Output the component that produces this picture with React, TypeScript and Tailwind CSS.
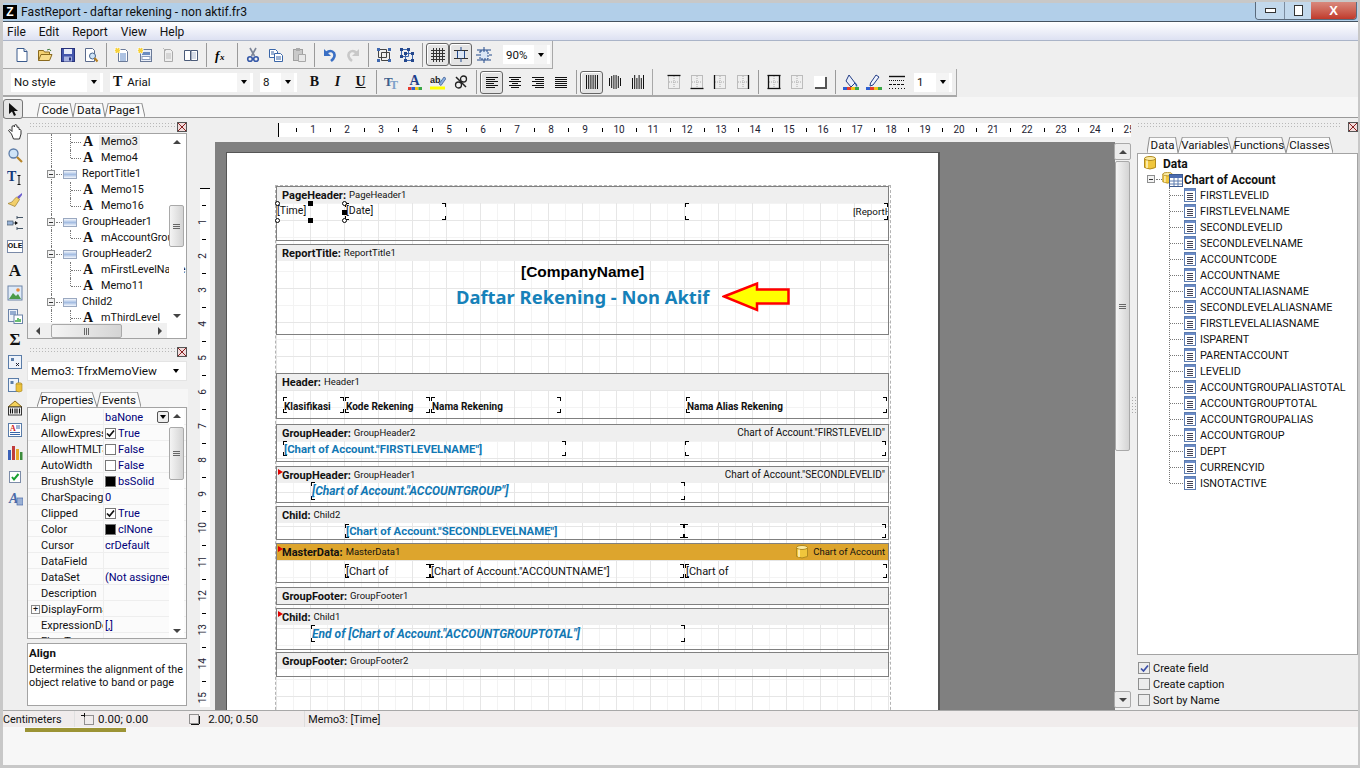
import React from "react";

const Ico = ({ children, s = 16 }: { children: React.ReactNode; s?: number }) => (
  <svg width={s} height={s} viewBox="0 0 16 16" className="shrink-0">{children}</svg>
);

const I = {
  page: <Ico><path d="M3 1.5h7l3 3v10H3z" fill="#fff" stroke="#3a5a8c" /><path d="M10 1.5v3h3" fill="#dfe8f5" stroke="#3a5a8c" /></Ico>,
  open: <Ico><path d="M1.5 13.5v-10h5l1 1.5h5v2" fill="#f3d071" stroke="#8a6a1e" /><path d="M1.5 13.5l2.5-6h11l-2.5 6z" fill="#f8dc8a" stroke="#8a6a1e" /><path d="M10 3q3-2 4 1" fill="none" stroke="#3a7a3a" /></Ico>,
  save: <Ico><rect x="1.5" y="1.5" width="13" height="13" fill="#4557ad" stroke="#27327a" /><rect x="4" y="2" width="8" height="5" fill="#e8ecf8" /><rect x="4" y="9.5" width="8" height="5" fill="#aab4e0" /><rect x="9" y="10.5" width="2" height="3" fill="#27327a" /></Ico>,
  preview: <Ico><path d="M2.5 1.5h7l2 2v11h-9z" fill="#fff" stroke="#5a6a8c" /><circle cx="9.5" cy="9" r="3" fill="#cfe4f7" stroke="#44638c" /><path d="M11.5 11l3 3.5" stroke="#b57d1c" strokeWidth="2" /></Ico>,
  rep1: <Ico><path d="M4.5 2.5h7l2 2v10h-9z" fill="#fff" stroke="#6a7a98" /><path d="M6 7h6M6 9h6M6 11h6M6 13h6" stroke="#5c86c4" /><rect x="1" y="1" width="5" height="5" fill="#f7d23c" stroke="#fff" strokeDasharray="1 1" /></Ico>,
  rep2: <Ico><rect x="3.5" y="2.5" width="11" height="12" fill="#e9eef7" stroke="#6a7a98" /><rect x="5" y="5" width="8" height="3" fill="#6b8cc0" /><rect x="5" y="9.5" width="8" height="3" fill="#fff" stroke="#8a9cbc" /><rect x="1" y="1" width="5" height="5" fill="#f7d23c" stroke="#fff" strokeDasharray="1 1" /></Ico>,
  rep3: <Ico><path d="M4.5 2.5h6l2 2v10h-8z" fill="#eee" stroke="#aaa" /><path d="M6 7h5M6 9h5M6 11h5" stroke="#bbb" /><path d="M3 1l3 3" stroke="#bbb" /></Ico>,
  book: <Ico><path d="M1.5 3.5h6v10h-6zM8 3.5h6.5v10H8z" fill="#fff" stroke="#4a5a78" /><path d="M9 5h4v7H9z" fill="#d7dde8" /></Ico>,
  fx: <Ico><text x="1" y="13" fontFamily="Liberation Serif" fontStyle="italic" fontWeight="700" fontSize="13">f</text><text x="6" y="13" fontFamily="Liberation Serif" fontStyle="italic" fontWeight="700" fontSize="9">x</text></Ico>,
  cut: <Ico><path d="M5 1l4.5 8M11 1L6.5 9" stroke="#7d8698" strokeWidth="1.6" /><circle cx="5" cy="12" r="2.3" fill="none" stroke="#3659a8" strokeWidth="1.6" /><circle cx="11" cy="12" r="2.3" fill="none" stroke="#3659a8" strokeWidth="1.6" /></Ico>,
  copy: <Ico><path d="M1.5 2.5h6l2 2v6h-8z" fill="#fff" stroke="#3a66a8" /><path d="M6.5 6.5h6l2 2v6h-8z" fill="#fff" stroke="#3a66a8" /><path d="M8 10h5M8 12h5M3 5h3M3 7h3" stroke="#3a66a8" /></Ico>,
  paste: <Ico><rect x="2.5" y="2.5" width="9" height="11" fill="#c9c9c9" stroke="#a0a0a0" /><rect x="5" y="1" width="4" height="3" fill="#aaa" /><path d="M7.5 7.5h7v7h-7z" fill="#e8e8e8" stroke="#a8a8a8" /></Ico>,
  undo: <Ico><path d="M4 6q5-4 8 0q2 4-3 8" fill="none" stroke="#3a6fc4" strokeWidth="2.6" /><path d="M2 2v7h7z" fill="#3a6fc4" /></Ico>,
  redo: <Ico><path d="M12 6q-5-4-8 0q-2 4 3 8" fill="none" stroke="#c8c8c8" strokeWidth="2.6" /><path d="M14 2v7H7z" fill="#c8c8c8" /></Ico>,
  group: <Ico><path d="M2.5 2.5h8v8h-8zM5.5 5.5h8v8h-8z" fill="none" stroke="#444" /><path d="M1 1h3v3H1zM12 1h3v3h-3zM1 12h3v3H1zM12 12h3v3h-3z" fill="#3e68b0" /></Ico>,
  ungroup: <Ico><path d="M2.5 2.5h7v7h-7zM6.5 6.5h7v7h-7z" fill="none" stroke="#3e68b0" /><path d="M1 1h3v3H1zM8 1h3v3H8zM1 8h3v3H1zM5 5h3v3H5zM12 5h3v3h-3zM5 12h3v3H5zM12 12h3v3h-3z" fill="#24478c" /></Ico>,
  grid: <Ico><path d="M1 3.5h14M1 6.5h14M1 9.5h14M1 12.5h14M3.5 1v14M6.5 1v14M9.5 1v14M12.5 1v14" stroke="#333" /></Ico>,
  fit: <Ico><path d="M4.5 3.5h7v8h-7z" fill="#dbe6f5" stroke="#234a8c" /><path d="M1 3.500h14M1 11.500h14" stroke="#333" /><path d="M8 0v4M8 11v4" stroke="#234a8c" /></Ico>,
  fit2: <Ico><rect x="4" y="4" width="8" height="8" fill="#dbe6f5" stroke="#234a8c" strokeDasharray="2 1" /><path d="M8 0v3M8 13v3M0 8h3M13 8h3M1 3h14M1 13h14" stroke="#234a8c" /></Ico>,
  tt: <Ico><text x="0" y="12" fontFamily="Liberation Serif" fontWeight="700" fontSize="13" fill="#3c5f8c">T</text><text x="6" y="15" fontFamily="Liberation Serif" fontWeight="700" fontSize="12" fill="#7ea0c8">T</text></Ico>,
  a: <Ico><text x="2.5" y="11" fontFamily="Liberation Serif" fontWeight="700" fontSize="14" fill="#1f3f8c">A</text><path d="M1 13h3.5v3H1z" fill="#e63b2e" /><path d="M4.5 13H8v3H4.5z" fill="#2f5fd0" /><path d="M8 13h3.5v3H8z" fill="#f2c31b" /><path d="M11.5 13H15v3h-3.5z" fill="#39a845" /></Ico>,
  ab: <Ico><text x="0" y="9" fontFamily="Liberation Sans" fontSize="9" fill="#222" fontWeight="700">ab</text><path d="M9 10l5-7 2 1.500-5 7z" fill="#8ab0e0" stroke="#33518c" strokeWidth=".7" /><rect x="0" y="12.500" width="15" height="3" fill="#ffff00" /></Ico>,
  chain: <Ico><path d="M3 3l10 10" fill="none" stroke="#222" strokeWidth="1.500" /><circle cx="10.500" cy="5" r="3" fill="none" stroke="#222" strokeWidth="1.300" /><circle cx="5.500" cy="11" r="3" fill="none" stroke="#222" strokeWidth="1.300" /></Ico>,
  fill: <Ico><path d="M6 1l6 8-4 4-5-6z" fill="#e8eefa" stroke="#223c84" /><path d="M12 9q2 2 1.500 3.500" stroke="#2c5aa8" strokeWidth="1.500" fill="none" /><path d="M0 13h4v3H0z" fill="#2f5fd0" /><path d="M4 13h4v3H4z" fill="#e63b2e" /><path d="M8 13h4v3H8z" fill="#f2c31b" /><path d="M12 13h4v3h-4z" fill="#39a845" /></Ico>,
  pen: <Ico><path d="M10 1l3 2-6 8-3 1 .500-3z" fill="#f0f4ff" stroke="#223c84" /><path d="M0 13h4v3H0z" fill="#2f5fd0" /><path d="M4 13h4v3H4z" fill="#e63b2e" /><path d="M8 13h4v3H8z" fill="#f2c31b" /><path d="M12 13h4v3h-4z" fill="#39a845" /></Ico>,
  lines: <Ico><path d="M0 2.500h16" stroke="#111" strokeWidth="1.400" /><path d="M0 6.500h16" stroke="#111" strokeDasharray="1 1" /><path d="M0 10.500h16" stroke="#111" strokeDasharray="3 1" /><path d="M0 14.500h16" stroke="#111" strokeDasharray="1 2" /></Ico>,
};

const align = (kind: string) => {
  const lines: [number, number][] =
    kind === "l" ? [[2, 14], [2, 11], [2, 14], [2, 10], [2, 14], [2, 11]] :
    kind === "c" ? [[2, 14], [4, 12], [2, 14], [5, 11], [2, 14], [4, 12]] :
    kind === "r" ? [[2, 14], [5, 14], [2, 14], [6, 14], [2, 14], [5, 14]] :
    [[2, 14], [2, 14], [2, 14], [2, 14], [2, 14], [2, 14]];
  return <Ico>{lines.map((l, i) => <path key={i} d={`M${l[0]} ${3.5 + i * 2}H${l[1]}`} stroke="#111" />)}</Ico>;
};
const vbars = (kind: string) => {
  const h: [number, number][] = kind === "a" ? [[1, 15], [1, 15], [1, 15], [1, 15], [1, 15], [1, 15]] : kind === "b" ? [[4, 12], [2, 14], [1, 15], [1, 15], [2, 14], [4, 12]] : [[4, 15], [1, 15], [4, 15], [1, 15], [4, 15], [1, 15]];
  return <Ico>{h.map((l, i) => <path key={i} d={`M${2.5 + i * 2.2} ${l[0]}V${l[1]}`} stroke="#111" />)}</Ico>;
};
const frame = (sides: string) => (
  <Ico>
    <rect x="2.5" y="1.500" width="11" height="13" fill="none" stroke="#888" strokeDasharray="1 1" />
    <path d="M8 2v12M3 8h10" stroke="#aaa" strokeDasharray="1 1" />
    {sides.includes("t") && <path d="M1.500 1.500h13" stroke="#111" strokeWidth="1.300" />}
    {sides.includes("b") && <path d="M1.500 14.500h13" stroke="#111" strokeWidth="1.300" />}
    {sides.includes("l") && <path d="M2.500 1v14" stroke="#111" strokeWidth="1.300" />}
    {sides.includes("r") && <path d="M13.500 1v14" stroke="#111" strokeWidth="1.300" />}
  </Ico>
);
const shadow = <Ico><rect x="2" y="2" width="11" height="11" fill="#fff" /><path d="M13 3h2v12H3v-2h10z" fill="#555" /></Ico>;

const Btn = ({ children, on }: { children: React.ReactNode; on?: boolean }) => (
  <div className={on ? "w-[23px] h-[23px] flex items-center justify-center rounded-[3px] border border-[#666] bg-[#e4e4e4] shadow-[inset_1px_1px_0_#fff]" : "w-[23px] h-[23px] flex items-center justify-center"}>{children}</div>
);
const Sep = () => (
  <div className="w-[8px] h-[24px] flex justify-center"><div className="w-[1px] h-full bg-[#9a9a9a]" /></div>
);
const Arrow = () => <div className="w-0 h-0 border-x-[3.5px] border-x-transparent border-t-[4px] border-t-black" />;
const Combo = ({ label, w, icon }: { label: string; w: string; icon?: React.ReactNode }) => (
  <div className={`${w} h-[19px] bg-white flex items-center pl-[3px] gap-[1px] relative`}>
    {icon}
    <span className="text-[11.5px] leading-none pt-[2px]">{label}</span>
    <div className="absolute right-[3px] top-0 bottom-0 w-[13px] flex items-center justify-center bg-[#f4f4f4]"><Arrow /></div>
  </div>
);
const Grip = ({ w }: { w: string }) => (
  <div className={`${w} h-[7px] bg-[radial-gradient(#b9b9b9_0.7px,transparent_0.8px)] bg-size-[3px_3px]`} />
);
const CloseX = () => (
  <div className="w-[10px] h-[10px] border border-[#555] bg-[#f2dcdc] flex items-center justify-center">
    <svg width="8" height="8" viewBox="0 0 8 8"><path d="M0 0l8 8M8 0L0 8" stroke="#8a2020" /></svg>
  </div>
);

const Tab = ({ label, w }: { label: string; w: string }) => (
  <div className={`${w} relative h-full flex items-center justify-center`}>
    <svg className="absolute inset-0 w-full h-full" viewBox="0 0 100 100" preserveAspectRatio="none">
      <path d="M0 100L8 1H92L100 100" fill="#fbfbfb" stroke="#8c8c8c" vectorEffect="non-scaling-stroke" />
    </svg>
    <span className="relative text-[11.5px] leading-none pt-[2px]">{label}</span>
  </div>
);

const ScrollBtn = ({ dir }: { dir: "u" | "d" | "l" | "r" }) => (
  <div className="w-[15px] h-[15px] flex items-center justify-center">
    <div className={
      dir === "u" ? "w-0 h-0 border-x-[4px] border-x-transparent border-b-[4px] border-b-[#444]" :
      dir === "d" ? "w-0 h-0 border-x-[4px] border-x-transparent border-t-[4px] border-t-[#444]" :
      dir === "l" ? "w-0 h-0 border-y-[4px] border-y-transparent border-r-[4px] border-r-[#444]" :
      "w-0 h-0 border-y-[4px] border-y-transparent border-l-[4px] border-l-[#444]"} />
  </div>
);
const Thumb = ({ cls, vertical }: { cls: string; vertical?: boolean }) => (
  <div className={`${cls} rounded-[2px] border border-[#a9a9a9] bg-gradient-to-r from-[#f4f4f4] to-[#d4d4d4] flex items-center justify-center`}>
    {vertical ? (
      <div className="flex flex-col gap-[1px]"><div className="w-[7px] h-[1px] bg-[#666]" /><div className="w-[7px] h-[1px] bg-[#666]" /><div className="w-[7px] h-[1px] bg-[#666]" /></div>
    ) : (
      <div className="flex gap-[1px]"><div className="w-[1px] h-[7px] bg-[#666]" /><div className="w-[1px] h-[7px] bg-[#666]" /><div className="w-[1px] h-[7px] bg-[#666]" /></div>
    )}
  </div>
);

/* left tools */
const Tools = [
  <Ico><path d="M4.500 10L1.500 6.500q.8-1.500 2.500-.300L5 7.500V3q0-1.300 1.200-1.300T7.500 3V1.800q0-1.200 1.200-1.200t1.300 1.400v1.200q1.800-.8 2 .8v1.500q1.800-.5 2 1v3.500L12.500 15h-6z" fill="#fff" stroke="#333" /></Ico>,
  <Ico><circle cx="6.500" cy="6.500" r="4.500" fill="#cfe4f7" stroke="#5c7ca8" strokeWidth="1.300" /><path d="M10 10l5 5" stroke="#b8862a" strokeWidth="2.200" /></Ico>,
  <Ico><text x="0" y="12" fontFamily="Liberation Serif" fontWeight="700" fontSize="14" fill="#123a7c">T</text><path d="M12 7v8M10.500 6.500h3M10.500 15.500h3" stroke="#111" /></Ico>,
  <Ico><path d="M15 1L10 5l2 2 3-4z" fill="#6a5acd" /><path d="M9.500 5l3 2.500-4.500 7-7-3q5-1 6-4z" fill="#f2cf6a" stroke="#9c7d2a" strokeWidth=".7" /></Ico>,
  <Ico><rect x="0" y="6" width="6" height="4" fill="#9ab4d8" stroke="#456" strokeWidth=".7" /><path d="M10 2.500h6M10 13.500h6M10 1v3M10 12v3M6 8h4" stroke="#456" /><path d="M8 6l3 2-3 2z" fill="#111" /></Ico>,
  <div className="w-[16px] h-[13px] border border-[#7a8aa8] bg-white flex items-center justify-center text-[8px] font-bold leading-none">OLE</div>,
  <span className="font-['Liberation_Serif'] font-bold text-[17px] leading-none">A</span>,
  <Ico><rect x="1" y="1" width="14" height="14" fill="#dfeaf8" stroke="#6c84a8" /><path d="M2 14l4-6 3 3 2-2 3 5z" fill="#4a9a4a" /><circle cx="11" cy="5" r="1.800" fill="#e88a3c" /></Ico>,
  <Ico><rect x="1.500" y="1.500" width="9" height="12" fill="#eef2f8" stroke="#6c84a8" /><path d="M3 4h6M3 6h6" stroke="#3a66a8" /><rect x="7" y="7" width="8.500" height="8.500" fill="#fff" stroke="#6c84a8" /><path d="M9 14v-2M11 14v-4M13 14v-3" stroke="#39a845" strokeWidth="1.500" /></Ico>,
  <span className="font-['Liberation_Serif'] font-bold text-[17px] leading-none">Σ</span>,
  <Ico><rect x="1.500" y="1.500" width="13" height="13" fill="#eef3fa" stroke="#5a7ca8" /><path d="M4 4h3v3H4z" fill="#5a7ca8" /><path d="M9 9l3 3M12 9l-3 3" stroke="#223" /></Ico>,
  <Ico><rect x="1.500" y="1.500" width="10" height="13" fill="#eef3fa" stroke="#5a7ca8" /><path d="M3.500 4h3v3h-3z" fill="#5a7ca8" /><ellipse cx="12" cy="7" rx="3" ry="1.300" fill="#f3d666" stroke="#a88420" strokeWidth=".6" /><path d="M9 7v7q3 2 6 0V7z" fill="#ecc23c" stroke="#a88420" strokeWidth=".6" /></Ico>,
  <Ico><path d="M8 1l7 6H1z" fill="#f4d25a" stroke="#8a6a1e" /><rect x="1.500" y="7" width="13" height="8" fill="#fff" stroke="#333" /><path d="M3.500 8.500v5M5.500 8.500v5M8 8.500v5M10 8.500v5M12.500 8.500v5" stroke="#111" strokeWidth="1.200" /></Ico>,
  <Ico><rect x="1.500" y="1.500" width="13" height="13" fill="#fff" stroke="#5a7ca8" /><text x="3" y="9" fontSize="8" fontFamily="Liberation Serif" fontWeight="700" fill="#d02020">A</text><path d="M9 4h4M9 6h4M3 10.500h10M3 12.500h10" stroke="#3a66a8" /></Ico>,
  <Ico><rect x="1" y="5" width="3" height="10" fill="#3c62b8" /><rect x="5" y="1" width="3" height="14" fill="#c03c3c" /><rect x="9" y="4" width="3" height="11" fill="#e8a92c" /><rect x="13" y="7" width="2.500" height="8" fill="#3c8c3c" /></Ico>,
  <Ico><rect x="2.500" y="2.500" width="11" height="11" fill="#fff" stroke="#7c8ca8" /><path d="M5 8l2 2.500L11.500 5" fill="none" stroke="#18a030" strokeWidth="2" /></Ico>,
  <Ico><text x="2" y="12" fontSize="14" fontFamily="Liberation Serif" fontWeight="700" fontStyle="italic" fill="#4a6aa8">A</text><rect x="10" y="7" width="6" height="7" fill="#9ab0d4" stroke="#4a6aa8" strokeWidth=".7" /></Ico>,
];
const toolGaps = ["mt-[6px]", "mt-[7px]", "mt-[6px]", "mt-[7px]", "mt-[7px]", "mt-[7px]", "mt-[8px]", "mt-[7px]", "mt-[7px]", "mt-[7px]", "mt-[7px]", "mt-[7px]", "mt-[7px]", "mt-[6px]", "mt-[7px]", "mt-[8px]", "mt-[6px]"];

const Toggle = () => (
  <div className="w-[8px] h-[8px] border border-[#8e8f8f] bg-[#f3f3f3] flex items-center justify-center"><div className="w-[4px] h-[1px] bg-[#333]" /></div>
);
const BandIco = () => (
  <div className="w-[14px] h-[9px] border border-[#9aa8c0] bg-gradient-to-b from-[#f4f7fc] via-[#a4bde2] to-[#f4f7fc]" />
);

const treeRows: { t: string; band?: boolean; sel?: boolean; last?: boolean }[] = [
  { t: "Memo3", sel: true }, { t: "Memo4", last: true }, { t: "ReportTitle1", band: true }, { t: "Memo15" }, { t: "Memo16", last: true },
  { t: "GroupHeader1", band: true }, { t: "mAccountGroup", last: true }, { t: "GroupHeader2", band: true }, { t: "mFirstLevelName" }, { t: "Memo11", last: true },
  { t: "Child2", band: true }, { t: "mThirdLevel" },
];

const TreeRow = ({ r }: { r: (typeof treeRows)[number] }) => (
  <div className="relative h-[16px] flex items-center whitespace-nowrap">
    <div className="absolute left-[23px] top-0 bottom-0 border-l border-dotted border-[#777]" />
    {r.band ? (
      <>
        <div className="absolute left-[19px]"><Toggle /></div>
        <div className="absolute left-[28px] w-[6px] top-[8px] border-t border-dotted border-[#777]" />
        <div className="absolute left-[35px]"><BandIco /></div>
        <span className="absolute left-[54px] top-[3px] text-[10.800px] leading-none">{r.t}</span>
      </>
    ) : (
      <>
        <div className={r.last ? "absolute left-[42px] top-0 h-[8px] border-l border-dotted border-[#777]" : "absolute left-[42px] top-0 bottom-0 border-l border-dotted border-[#777]"} />
        <div className="absolute left-[43px] w-[10px] top-[8px] border-t border-dotted border-[#777]" />
        <span className="absolute left-[55px] font-['Liberation_Serif'] font-bold text-[14px] leading-none">A</span>
        <span className={r.sel ? "absolute left-[73px] top-[1px] text-[10.800px] leading-none bg-[#efefef] px-[2px] -ml-[2px] py-[2px]" : "absolute left-[73px] top-[3px] text-[10.800px] leading-none"}>{r.t}</span>
      </>
    )}
  </div>
);

const Check = ({ on }: { on?: boolean }) => (
  <div className="w-[11px] h-[11px] border border-[#777] bg-white flex items-center justify-center shrink-0">
    {on && <svg width="9" height="9" viewBox="0 0 9 9"><path d="M1 4.500l2.500 2.500L8 1.500" fill="none" stroke="#111" strokeWidth="1.700" /></svg>}
  </div>
);

const props: { k: string; v?: string; check?: boolean; on?: boolean; swatch?: boolean; plus?: boolean; dd?: boolean }[] = [
  { k: "Align", v: "baNone", dd: true }, { k: "AllowExpressions", v: "True", check: true, on: true }, { k: "AllowHTMLTags", v: "False", check: true },
  { k: "AutoWidth", v: "False", check: true }, { k: "BrushStyle", v: "bsSolid", swatch: true }, { k: "CharSpacing", v: "0" },
  { k: "Clipped", v: "True", check: true, on: true }, { k: "Color", v: "clNone", swatch: true }, { k: "Cursor", v: "crDefault" },
  { k: "DataField" }, { k: "DataSet", v: "(Not assigned)" }, { k: "Description" }, { k: "DisplayFormat", plus: true }, { k: "ExpressionDelimiters", v: "[,]" }, { k: "FlowTo" },
];

const fields = ["FIRSTLEVELID", "FIRSTLEVELNAME", "SECONDLEVELID", "SECONDLEVELNAME", "ACCOUNTCODE", "ACCOUNTNAME", "ACCOUNTALIASNAME", "SECONDLEVELALIASNAME", "FIRSTLEVELALIASNAME", "ISPARENT", "PARENTACCOUNT", "LEVELID", "ACCOUNTGROUPALIASTOTAL", "ACCOUNTGROUPTOTAL", "ACCOUNTGROUPALIAS", "ACCOUNTGROUP", "DEPT", "CURRENCYID", "ISNOTACTIVE"];

const Cyl = ({ w = 12, h = 14 }: { w?: number; h?: number }) => (
  <svg width={w} height={h} viewBox="0 0 12 14" className="shrink-0">
    <path d="M.5 2.500v9q5.500 3 11 0v-9z" fill="#f0c63c" stroke="#b08a20" />
    <ellipse cx="6" cy="2.500" rx="5.500" ry="2" fill="#fbeaa0" stroke="#b08a20" />
    <path d="M3 4.500v7.500" stroke="#fff6c8" strokeWidth="1.500" />
  </svg>
);

const Corners = () => (
  <>
    <div className="absolute left-0 top-0 w-[4px] h-[4px] border-l border-t border-black" />
    <div className="absolute right-0 top-0 w-[4px] h-[4px] border-r border-t border-black" />
    <div className="absolute left-0 bottom-0 w-[4px] h-[4px] border-l border-b border-black" />
    <div className="absolute right-0 bottom-0 w-[4px] h-[4px] border-r border-b border-black" />
  </>
);
const Memo = ({ cls, children, txt }: { cls: string; children?: React.ReactNode; txt?: string }) => (
  <div className={`absolute ${cls}`}>
    <Corners />
    {children && <div className={`absolute left-[1px] top-0 bottom-0 flex items-center whitespace-nowrap ${txt ?? ""}`}>{children}</div>}
  </div>
);
const Band = ({ cls, name, label, right, hdr, tri, children }: { cls: string; name: string; label: string; right?: React.ReactNode; hdr?: string; tri?: boolean; children?: React.ReactNode }) => (
  <div className={`relative border border-[#808080] w-[613px] shrink-0 ${cls}`}>
    <div className={`h-[16px] flex items-center pl-[5px] whitespace-nowrap leading-none ${hdr ?? "bg-[#efefef]"}`}>
      <b className="font-bold text-[11px]">{name}:</b><span className="ml-[3px] text-[9.500px]">{label}</span>
      {right && <div className="ml-auto pr-[3px] flex items-center gap-[5px] text-[10px]">{right}</div>}
    </div>
    {tri && <div className="absolute left-[1px] top-[2px] w-0 h-0 border-y-[3.5px] border-y-transparent border-l-[5px] border-l-[#e00000]" />}
    {children}
  </div>
);
const Handle = ({ cls }: { cls: string }) => <div className={`absolute w-[5px] h-[5px] bg-black ${cls}`} />;
const HollowHandle = ({ cls }: { cls: string }) => <div className={`absolute w-[5px] h-[5px] rounded-full border border-black bg-white ${cls}`} />;

const blue = "text-[#1278b4] font-bold text-[11.400px] leading-none pt-[2px]";
const blueI = "text-[#1278b4] font-bold italic text-[12px] leading-none";
const hdrTxt = "font-bold text-[10px] leading-none pt-[3px]";

const hCells = Array.from({ length: 25 }, (_, i) => i + 1);
const vCells = Array.from({ length: 15 }, (_, i) => i + 1);

export default function App() {
  return (
    <div className="w-[1360px] h-[768px] overflow-hidden bg-[#c8c8c8] pt-[3px] pb-[3px] pl-[3px] pr-[2px] flex flex-col text-[#111] font-['Roboto','Liberation_Sans',sans-serif]">
      {/* title */}
      <div className="h-[18px] shrink-0 bg-[#b2cfe9] flex items-center relative">
        <div className="w-[14px] h-[14px] bg-black text-white font-bold text-[12px] leading-none flex items-center justify-center ml-0 font-['Liberation_Sans']">Z</div>
        <span className="ml-[4px] text-[12.200px] leading-none">FastReport - daftar rekening - non aktif.fr3</span>
        <div className="absolute right-[1px] top-[-1px] h-[18px] w-[102px] flex rounded-b-[4px] border border-t-0 border-[#5a6a7c] overflow-hidden">
          <div className="w-[28px] bg-[#c2d8ec] flex items-center justify-center"><div className="w-[11px] h-[5px] border border-[#333] bg-white" /></div>
          <div className="w-[27px] bg-[#c2d8ec] border-l border-[#7c8ca0] flex items-center justify-center"><div className="w-[9px] h-[11px] border border-[#333] bg-white" /></div>
          <div className="flex-1 bg-gradient-to-b from-[#d8887c] to-[#c0392b] text-white font-bold text-[13px] leading-none flex items-center justify-center font-['Liberation_Sans']">X</div>
        </div>
      </div>
      <div className="h-[1px] shrink-0 bg-[#44525f]" />
      {/* menu */}
      <div className="h-[19px] shrink-0 bg-gradient-to-b from-[#ffffff] to-[#dde1f2] border-b border-[#aab4c8] flex items-center gap-[13px] pl-[4px] pt-[2px] text-[12px] leading-none">
        <span>File</span><span>Edit</span><span>Report</span><span>View</span><span>Help</span>
      </div>
      {/* toolbar 1 */}
      <div className="h-[28px] shrink-0 bg-[#efefef] flex">
        <div className="w-[550px] h-[28px] border-b border-r border-[#a8a8a8] flex items-center pl-[7px]">
          <Btn>{I.page}</Btn><Btn>{I.open}</Btn><Btn>{I.save}</Btn><Btn>{I.preview}</Btn><Sep />
          <Btn>{I.rep1}</Btn><Btn>{I.rep2}</Btn><Btn>{I.rep3}</Btn><Btn>{I.book}</Btn><Sep />
          <Btn>{I.fx}</Btn><Sep />
          <Btn>{I.cut}</Btn><Btn>{I.copy}</Btn><Btn>{I.paste}</Btn><Sep />
          <Btn>{I.undo}</Btn><Btn>{I.redo}</Btn><Sep />
          <Btn>{I.group}</Btn><Btn>{I.ungroup}</Btn><Sep />
          <Btn on>{I.grid}</Btn><Btn on>{I.fit}</Btn><Btn>{I.fit2}</Btn>
          <div className="ml-[8px]"><Combo label="90%" w="w-[47px]" /></div>
        </div>
      </div>
      {/* toolbar 2 */}
      <div className="h-[28px] shrink-0 bg-[#efefef] flex">
        <div className="w-[954px] h-[28px] border-b-2 border-r border-[#a8a8a8] flex items-center pl-[8px]">
          <Combo label="No style" w="w-[92px]" />
          <div className="ml-[7px]"><Combo label="Arial" w="w-[143px]" icon={<span className="font-['Liberation_Serif'] font-bold text-[14px] leading-none mr-[4px]">T</span>} /></div>
          <div className="ml-[7px]"><Combo label="8" w="w-[37px]" /></div>
          <div className="w-[6px]" />
          <Btn><span className="font-['Liberation_Serif'] font-bold text-[14px] leading-none">B</span></Btn>
          <Btn><span className="font-['Liberation_Serif'] font-bold italic text-[14px] leading-none">I</span></Btn>
          <Btn><span className="font-['Liberation_Serif'] font-bold underline text-[14px] leading-none">U</span></Btn>
          <Sep />
          <Btn>{I.tt}</Btn><Btn>{I.a}</Btn><Btn>{I.ab}</Btn><Btn>{I.chain}</Btn><Sep />
          <Btn on>{align("l")}</Btn><Btn>{align("c")}</Btn><Btn>{align("r")}</Btn><Btn>{align("j")}</Btn><Sep />
          <Btn on>{vbars("a")}</Btn><Btn>{vbars("b")}</Btn><Btn>{vbars("c")}</Btn>
          <div className="w-[3px]" /><div className="w-[1px] h-full bg-[#a8a8a8]" />
          <div className="w-[9px]" />
          <Btn>{frame("t")}</Btn><Btn>{frame("b")}</Btn><Btn>{frame("l")}</Btn><Btn>{frame("r")}</Btn><Sep />
          <Btn>{frame("tblr")}</Btn><Btn>{frame("")}</Btn><Btn>{shadow}</Btn><Sep />
          <Btn>{I.fill}</Btn><Btn>{I.pen}</Btn><Btn>{I.lines}</Btn>
          <div className="ml-[6px]"><Combo label="1" w="w-[38px]" /></div>
        </div>
      </div>
      {/* tabs row */}
      <div className="h-[21px] shrink-0 bg-[#f6f6f6] border-b border-[#9a9a9a] flex relative">
        <div className="w-[20px] h-[20px] mt-[2px] rounded-[3px] border border-[#777] bg-[#e6e6e6] flex items-center justify-center">
          <svg width="12" height="15" viewBox="0 0 12 15"><path d="M2 1v11l3-2.500 2 4.500 2-1-2-4h4z" fill="#111" /></svg>
        </div>
        <div className="ml-[14px] mt-[6px] h-[14px] flex">
          <Tab label="Code" w="w-[36px]" /><Tab label="Data" w="w-[32px]" /><Tab label="Page1" w="w-[40px]" />
        </div>
      </div>
      {/* main */}
      <div className="flex-1 min-h-0 flex bg-[#efefef]">
        {/* left tools */}
        <div className="w-[24px] shrink-0 flex flex-col items-center">
          {Tools.map((t, i) => (
            <div key={i} className={`h-[16px] flex items-center justify-center ${toolGaps[i]}`}>{t}</div>
          ))}
        </div>
        {/* left panels */}
        <div className="w-[161px] shrink-0 flex flex-col pt-[4px]">
          <div className="h-[11px] flex items-start pl-[2px] pr-[1px] justify-between">
            <Grip w="w-[146px]" /><CloseX />
          </div>
          <div className="h-[206px] w-[160px] border border-[#a3a3a3] bg-white relative overflow-hidden">
            <div className="absolute inset-x-0 top-0 h-[192px] overflow-hidden">
              {treeRows.map((r) => <TreeRow key={r.t} r={r} />)}
            </div>
            <div className="absolute right-[2px] top-0 bottom-[15px] w-[15px] bg-white flex flex-col items-center justify-between">
              <ScrollBtn dir="u" />
              <Thumb cls="absolute top-[71px] h-[42px] w-[15px]" vertical />
              <ScrollBtn dir="d" />
            </div>
            <div className="absolute left-0 right-[19px] bottom-0 h-[15px] bg-[#f0f0f0] flex items-center pl-[2px] justify-between">
              <ScrollBtn dir="l" />
              <Thumb cls="absolute left-[23px] top-[1px] w-[71px] h-[14px]" />
              <ScrollBtn dir="r" />
            </div>
          </div>
          <div className="mt-[8px] h-[11px] flex items-start pl-[2px] pr-[1px] justify-between">
            <Grip w="w-[146px]" /><CloseX />
          </div>
          <div className="mt-[3px] h-[20px] w-[160px] bg-white border border-[#e4e4e4] flex items-center justify-between px-[3px] text-[11.800px] leading-none">
            <span className="pt-[2px]">Memo3: TfrxMemoView</span><div className="mr-[4px]"><Arrow /></div>
          </div>
          <div className="mt-[8px] h-[18px] flex pl-[10px] shrink-0 bg-[#f6f6f6] pt-[3px]">
            <Tab label="Properties" w="w-[60px]" /><Tab label="Events" w="w-[44px]" />
          </div>
          <div className="h-[232px] w-[160px] border border-[#a3a3a3] bg-[#fbfbfb] relative overflow-hidden">
            <div className="h-[1px]" />
            {props.map((p) => (
              <div key={p.k} className="h-[16px] flex border-b border-[#eeeeee] text-[11px] leading-none">
                <div className="w-[76px] shrink-0 border-r border-[#eeeeee] relative overflow-hidden flex items-center pl-[13px] pt-[1px] whitespace-nowrap">
                  {p.plus && <div className="absolute left-[3px] w-[9px] h-[9px] border border-[#888] flex items-center justify-center text-[9px] leading-none">+</div>}
                  {p.k}
                </div>
                <div className="w-[66px] shrink-0 overflow-hidden flex items-center pl-[1px] pt-[1px] gap-[2px] text-[#00007a] whitespace-nowrap relative">
                  {p.check && <Check on={p.on} />}
                  {p.swatch && <div className="w-[11px] h-[11px] bg-black border border-[#777] shrink-0" />}
                  {p.v}
                  {p.dd && <div className="absolute right-[1px] w-[12px] h-[12px] border border-[#555] rounded-[2px] bg-[#eee] flex items-center justify-center"><Arrow /></div>}
                </div>
              </div>
            ))}
            <div className="absolute right-[2px] top-0 bottom-0 w-[15px] bg-white flex flex-col items-center justify-between">
              <ScrollBtn dir="u" />
              <Thumb cls="absolute top-[19px] h-[53px] w-[15px]" vertical />
              <ScrollBtn dir="d" />
            </div>
          </div>
          <div className="mt-[4px] h-[63px] w-[160px] border border-[#a3a3a3] bg-white px-[1px] pt-[3px] text-[10.800px] leading-[13px]">
            <div className="font-bold h-[16px] text-[11.500px]">Align</div>
            <div>Determines the alignment of the object relative to band or page</div>
          </div>
        </div>
        {/* center */}
        <div className="flex-1 min-w-0 flex flex-col">
          <div className="h-[5px] shrink-0" />
          <div className="h-[14px] w-[853px] shrink-0 ml-[90px] flex bg-white overflow-hidden text-[10px] leading-none text-[#223] items-center">
            <div className="w-[1px] bg-black h-full shrink-0" />
            <div className="w-[8.5px] shrink-0" />
            {hCells.map((n) => (
              <React.Fragment key={n}>
                <div className="w-[17px] shrink-0 flex items-center justify-center"><div className="w-[1px] h-[4px] bg-black" /></div>
                <div className="w-[17px] shrink-0 text-center">{n}</div>
              </React.Fragment>
            ))}
          </div>
          <div className="flex-1 min-h-0 flex">
            {/* vertical ruler */}
            <div className="w-[27px] shrink-0 pl-[12px] pt-[51px] overflow-hidden">
              <div className="w-[10px] bg-white flex flex-col text-[10px] leading-none text-[#223]">
                <div className="h-[1px] bg-black" />
                <div className="h-[7.5px] shrink-0" />
                {vCells.map((n) => (
                  <React.Fragment key={n}>
                    <div className="h-[17px] shrink-0 flex items-center"><div className="ml-[2px] w-[4px] h-[1px] bg-black" /></div>
                    <div className="h-[17px] shrink-0 flex items-center justify-center pr-[4px]"><span className="[writing-mode:vertical-rl] rotate-180">{n}</span></div>
                  </React.Fragment>
                ))}
              </div>
            </div>
            {/* gray desk */}
            <div className="w-[900px] shrink-0 mt-[5px] bg-[#808080] pt-[10px] pl-[11px] overflow-hidden">
              <div className="w-[714px] h-[600px] bg-white border-l border-t border-[#555] border-r-2 pl-[48px] pt-[32px]">
                <div className="relative w-[616px] h-[560px] border-x border-t border-dashed border-[#b4b4b4] bg-[linear-gradient(#e6e6e6_1px,transparent_1px),linear-gradient(90deg,#e6e6e6_1px,transparent_1px),linear-gradient(#f3f3f3_1px,transparent_1px),linear-gradient(90deg,#f3f3f3_1px,transparent_1px)] bg-size-[34px_34px,34px_34px,17px_17px,17px_17px] flex flex-col">
                  <Band cls="h-[55px] bg-transparent" name="PageHeader" label="PageHeader1">
                    <Memo cls="left-[68px] top-[16px] w-[101px] h-[17px]" txt="text-[10.500px] leading-none"><span>[Date]</span></Memo>
                    <Memo cls="left-[408px] top-[16px] w-[203px] h-[17px]" />
                    <div className="absolute left-0 top-[16px] w-[67px] h-[17px] flex items-center whitespace-nowrap text-[10.500px] leading-none">[Time]</div>
                    <div className="absolute left-[576px] top-[16px] h-[17px] w-[35px] overflow-hidden flex items-center whitespace-nowrap text-[9.800px] leading-none">[ReportHeader]</div>
                    <Handle cls="left-[31px] top-[14px]" /><Handle cls="left-[31px] top-[31px]" /><Handle cls="left-[65px] top-[23px]" />
                    <HollowHandle cls="left-[65px] top-[14px]" /><HollowHandle cls="left-[65px] top-[31px]" /><HollowHandle cls="-left-[2px] top-[14px]" /><HollowHandle cls="-left-[2px] top-[31px]" />
                  </Band>
                  <Band cls="mt-[3px] h-[91px]" name="ReportTitle" label="ReportTitle1">
                    <div className="absolute left-[244px] top-[17px] h-[20px] flex items-center whitespace-nowrap font-['Liberation_Sans'] font-bold text-[15.500px] leading-none text-black">[CompanyName]</div>
                    <div className="absolute left-[179px] top-[39px] h-[26px] flex items-center whitespace-nowrap font-['Noto_Sans'] font-bold text-[18.400px] leading-none text-[#1681b9]">Daftar Rekening - Non Aktif</div>
                  </Band>
                  <Band cls="mt-[38px] h-[46px]" name="Header" label="Header1">
                    <Memo cls="left-[6px] top-[23px] w-[61px] h-[16px]" txt={hdrTxt}><span>Klasifikasi</span></Memo>
                    <Memo cls="left-[68px] top-[23px] w-[85px] h-[16px]" txt={hdrTxt}><span>Kode Rekening</span></Memo>
                    <Memo cls="left-[154px] top-[23px] w-[130px] h-[16px]" txt={hdrTxt}><span>Nama Rekening</span></Memo>
                    <Memo cls="left-[409px] top-[23px] w-[201px] h-[16px]" txt={hdrTxt}><span>Nama Alias Rekening</span></Memo>
                  </Band>
                  <Band cls="mt-[5px] h-[38px]" name="GroupHeader" label="GroupHeader2" right={<span>Chart of Account."FIRSTLEVELID"</span>}>
                    <Memo cls="left-[6px] top-[16px] w-[283px] h-[15px]" txt={blue}><span>[Chart of Account."FIRSTLEVELNAME"]</span></Memo>
                    <Memo cls="left-[408px] top-[16px] w-[201px] h-[15px]" />
                  </Band>
                  <Band cls="mt-[4px] h-[37px]" name="GroupHeader" label="GroupHeader1" tri right={<span>Chart of Account."SECONDLEVELID"</span>}>
                    <Memo cls="left-[34px] top-[15px] w-[374px] h-[18px]" txt={blueI}><span>[Chart of Account."ACCOUNTGROUP"]</span></Memo>
                  </Band>
                  <Band cls="mt-[3px] h-[34px]" name="Child" label="Child2">
                    <Memo cls="left-[68px] top-[17px] w-[339px] h-[14px]" txt={blue}><span>[Chart of Account."SECONDLEVELNAME"]</span></Memo>
                    <Memo cls="left-[407px] top-[17px] w-[202px] h-[14px]" />
                  </Band>
                  <Band cls="mt-[3px] h-[40px]" name="MasterData" label="MasterData1" hdr="bg-[#dda52d]" tri right={<><Cyl /><span className="text-[9.500px]">Chart of Account</span></>}>
                    <Memo cls="left-[68px] top-[20px] w-[85px] h-[14px]" txt="text-[11px] leading-none"><span>[Chart of</span></Memo>
                    <Memo cls="left-[153px] top-[20px] w-[254px] h-[14px]" txt="text-[11px] leading-none"><span>[Chart of Account."ACCOUNTNAME"]</span></Memo>
                    <Memo cls="left-[408px] top-[20px] w-[202px] h-[14px]" txt="text-[11px] leading-none"><span>[Chart of</span></Memo>
                  </Band>
                  <Band cls="mt-[4px] h-[18px]" name="GroupFooter" label="GroupFooter1" />
                  <Band cls="mt-[3px] h-[42px]" name="Child" label="Child1" tri>
                    <Memo cls="left-[34px] top-[16px] w-[374px] h-[17px]" txt={blueI}><span>End of [Chart of Account."ACCOUNTGROUPTOTAL"]</span></Memo>
                  </Band>
                  <Band cls="mt-[2px] h-[25px]" name="GroupFooter" label="GroupFooter2" />
                  {/* annotation arrow lying over the page */}
                  <svg className="absolute left-[446px] top-[95px]" width="70" height="32" viewBox="0 0 70 32">
                    <path d="M2 15.500L35 2.500V8.500H66.500V22.500H35V29z" fill="#ffff00" stroke="#ff0000" strokeWidth="2.500" />
                  </svg>
                </div>
              </div>
            </div>
            {/* v scrollbar */}
            <div className="w-[15px] shrink-0 mt-[5px] bg-[#f1f1f1] relative flex flex-col justify-between items-center">
              <div className="border border-[#a9a9a9] rounded-[2px] bg-[#ececec] mt-[1px]"><ScrollBtn dir="u" /></div>
              <Thumb cls="absolute top-[19px] h-[290px] w-[15px]" vertical />
              <div className="border border-[#a9a9a9] rounded-[2px] bg-[#ececec] mb-[2px]"><ScrollBtn dir="d" /></div>
            </div>
            <div className="w-[7px] shrink-0 flex items-center justify-center mt-[5px]">
              <div className="w-[5px] h-[18px] bg-[radial-gradient(#a9a9a9_0.7px,transparent_0.8px)] bg-size-[3px_3px] -mt-[42px]" />
            </div>
          </div>
        </div>
        {/* right panel */}
        <div className="w-[221px] shrink-0 flex flex-col pt-[4px]">
          <div className="h-[11px] flex items-start justify-between">
            <Grip w="w-[205px]" /><CloseX />
          </div>
          <div className="mt-[4px] h-[16px] flex pl-[10px] shrink-0">
            <Tab label="Data" w="w-[31px]" /><Tab label="Variables" w="w-[54px]" /><Tab label="Functions" w="w-[54px]" /><Tab label="Classes" w="w-[47px]" />
          </div>
          <div className="h-[502px] border border-[#a3a3a3] bg-white overflow-hidden text-[10.800px] leading-none whitespace-nowrap relative">
            <div className="h-[16px] mt-[1px] flex items-center pl-[6px] font-bold text-[12px]">
              <Cyl /><span className="ml-[7px] pt-[1px]">Data</span>
            </div>
            <div className="h-[16px] flex items-center relative font-bold text-[12px]">
              <div className="absolute left-[9px]"><Toggle /></div>
              <div className="absolute left-[18px] w-[6px] top-[8px] border-t border-dotted border-[#777]" />
              <div className="absolute left-[24px] top-[1px]"><Cyl w={11} h={12} /></div>
              <svg className="absolute left-[31px] top-[3px]" width="14" height="13" viewBox="0 0 14 13"><rect x=".5" y=".5" width="13" height="12" fill="#fff" stroke="#3c5a90" /><rect x="1" y="1" width="12" height="3" fill="#4c6cb0" /><path d="M1 7h12M1 10h12M5 4v8M9 4v8" stroke="#5c7cb0" /></svg>
              <span className="ml-[46px] pt-[1px]">Chart of Account</span>
            </div>
            <div className="absolute left-[31px] top-[33px] h-[296px] border-l border-dotted border-[#777]" />
            {fields.map((f) => (
              <div key={f} className="h-[16px] relative flex items-center">
                <div className="absolute left-[32px] w-[13px] top-[8px] border-t border-dotted border-[#777]" />
                <svg className="absolute left-[46px] top-[1px]" width="12" height="14" viewBox="0 0 12 14"><rect x=".5" y=".5" width="11" height="13" fill="#fff" stroke="#5c7cb0" /><rect x="1" y="1" width="10" height="2" fill="#6c8cc8" /><path d="M3 5.500h6M3 7.500h6M3 9.500h6M3 11.500h6" stroke="#445" /></svg>
                <span className="ml-[62px] pt-[2px]">{f}</span>
              </div>
            ))}
          </div>
          <div className="mt-[5px] flex flex-col text-[11px] leading-none pl-[1px]">
            {[["Create field", true], ["Create caption", false], ["Sort by Name", false]].map(([l, on]) => (
              <div key={l as string} className="h-[16px] flex items-center gap-[3px]">
                <div className="w-[12px] h-[12px] border border-[#8e8f8f] bg-[#ececec] flex items-center justify-center">
                  {on && <svg width="9" height="9" viewBox="0 0 9 9"><path d="M1 4.500l2.500 2.500L8 1.500" fill="none" stroke="#3a4ea8" strokeWidth="1.700" /></svg>}
                </div>
                <span className="pt-[1px]">{l as string}</span>
              </div>
            ))}
          </div>
        </div>
      </div>
      {/* status */}
      <div className="h-[17px] shrink-0 bg-[#f0ecec] border-t border-[#a8a8a8] flex items-center text-[11.500px] leading-none whitespace-nowrap relative">
        <div className="w-[72px] h-full flex items-center border-r border-[#e0e0e0] text-[10.800px] pt-[2px]">Centimeters</div>
        <div className="w-[6px]" />
        <svg width="14" height="13" viewBox="0 0 14 13"><path d="M3.500 2.500h9v9h-9z" fill="none" stroke="#333" strokeDasharray="1 1" /><path d="M0 2.500h4M3.500 0v4" stroke="#111" /></svg>
        <span className="ml-[3px] pt-[2px]">0.00; 0.00</span>
        <div className="w-[40px]" />
        <svg width="14" height="13" viewBox="0 0 14 13"><path d="M1.500 1.500h9v9h-9z" fill="none" stroke="#333" strokeDasharray="1 1" /><path d="M3 11.500h8M11.500 3v8" stroke="#111" /></svg>
        <span className="ml-[6px] pt-[2px]">2.00; 0.50</span>
        <div className="ml-[46px] h-full border-l border-[#ddd] pl-[3px] pt-[2px] flex items-center text-[10.800px]">Memo3: [Time]</div>
      </div>
      {/* below */}
      <div className="h-[38px] shrink-0 bg-[#f7f7f7] pl-[22px] pt-[1px]">
        <div className="w-[101px] h-[4px] bg-[#9c9435]" />
      </div>
    </div>
  );
}
